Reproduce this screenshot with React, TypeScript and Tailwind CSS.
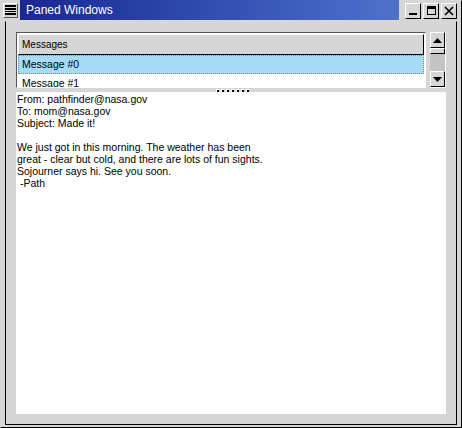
import React from "react";

const font = { fontFamily: '"Liberation Sans", Arial, sans-serif' };

function MenuIcon() {
  return (
    <div className="w-[20px] h-[20px] bg-[#d6d6d6] flex items-center justify-center">
      <div className="w-[15px] h-[15px] border-l border-t border-white border-r border-b border-r-[#555] border-b-[#555] flex flex-col justify-between py-[1px] px-[1px]">
        {Array.from({ length: 7 }).map((_, i) => (
          <div key={i} className="h-[1px] bg-black" />
        ))}
      </div>
    </div>
  );
}

function TitleButton({ children }: { children: React.ReactNode }) {
  return (
    <div className="w-[16px] h-[16px] bg-[#d6d6d6] border border-t-white border-l-white border-r-black border-b-black flex items-center justify-center">
      {children}
    </div>
  );
}

function ScrollButton({ up }: { up: boolean }) {
  return (
    <div className="h-[16px] bg-[#d6d6d6] border border-t-white border-l-white border-r-black border-b-black flex items-center justify-center">
      <svg width="9" height="5" viewBox="0 0 9 5">
        {up ? <polygon points="4.5,0 9,5 0,5" fill="#000" /> : <polygon points="0,0 9,0 4.5,5" fill="#000" />}
      </svg>
    </div>
  );
}

export default function App() {
  const body = [
    "From: pathfinder@nasa.gov",
    "To: mom@nasa.gov",
    "Subject: Made it!",
    "",
    "We just got in this morning. The weather has been",
    "great - clear but cold, and there are lots of fun sights.",
    "Sojourner says hi. See you soon.",
    " -Path",
  ];

  return (
    <div className="w-[462px] h-[428px] bg-[#d6d6d6] border border-t-[#d6d6d6] border-l-[#d6d6d6] border-r-black border-b-black flex flex-col text-black" style={font}>
      {/* title bar */}
      <div className="h-[20px] flex shrink-0 -mt-[1px] -ml-[1px]">
        <MenuIcon />
        <div className="flex-1 bg-gradient-to-r from-[#1a2694] to-[#4e72cc] text-white text-[12px] leading-[20px] pl-[6px]">
          Paned Windows
        </div>
        <div className="w-[62px] flex items-center gap-[2px] pl-[6px] pt-[1px] bg-[#d6d6d6]">
          <TitleButton>
            <div className="w-[8px] h-[2px] bg-black mt-[7px]" />
          </TitleButton>
          <TitleButton>
            <div className="w-[9px] h-[9px] border border-black border-t-[3px]" />
          </TitleButton>
          <TitleButton>
            <svg width="10" height="10" viewBox="0 0 10 10">
              <path d="M1 1 L9 9 M9 1 L1 9" stroke="#000" strokeWidth="1.6" />
            </svg>
          </TitleButton>
        </div>
      </div>

      {/* frame */}
      <div className="flex-1 flex px-[4px] pt-[1px] pb-[2px]">
        <div className="flex-1 border border-t-[#d6d6d6] border-l-black border-r-black border-b-black flex flex-col pl-[10px] pr-[10px] pt-[10px] pb-[10px]">
          {/* top pane */}
          <div className="h-[56px] flex gap-[4px] shrink-0">
            <div className="flex-1 border border-t-[#555] border-l-[#555] border-r-white border-b-white p-[1px] overflow-hidden bg-white flex flex-col">
              <div className="h-[21px] shrink-0 bg-[#d6d6d6] border border-t-white border-l-white border-r-black border-b-black text-[10px] leading-[19px] pl-[3px]">
                Messages
              </div>
              <div className="h-[19px] shrink-0 bg-[#a6dcf8] text-[10.5px] leading-[17px] pl-[3px] border border-dotted border-[#6a8fb0]">
                Message #0
              </div>
              <div className="h-[19px] shrink-0 text-[10.5px] leading-[17px] pl-[4px] pt-[1px]">Message #1</div>
            </div>
            <div className="w-[16px] flex flex-col border-r border-b border-white">
              <ScrollButton up />
              <div className="h-[6px] bg-[#d6d6d6] border border-t-white border-l-white border-r-black border-b-black" />
              <div className="flex-1 bg-[#c4c4c4]" />
              <ScrollButton up={false} />
            </div>
          </div>

          {/* sash */}
          <div className="h-[4px] shrink-0 relative">
            <div className="absolute left-[200px] top-[1px] flex gap-[2px]">
              {Array.from({ length: 7 }).map((_, i) => (
                <div key={i} className="w-[3px] h-[3px] bg-black border-l border-t border-white" />
              ))}
            </div>
          </div>

          {/* text */}
          <div className="flex-1 bg-white pl-[1px] pt-[1px] text-[10.5px] leading-[12px] whitespace-pre">
            {body.map((l, i) => (
              <div key={i} className="h-[12px]">{l}</div>
            ))}
          </div>
        </div>
      </div>
    </div>
  );
}
